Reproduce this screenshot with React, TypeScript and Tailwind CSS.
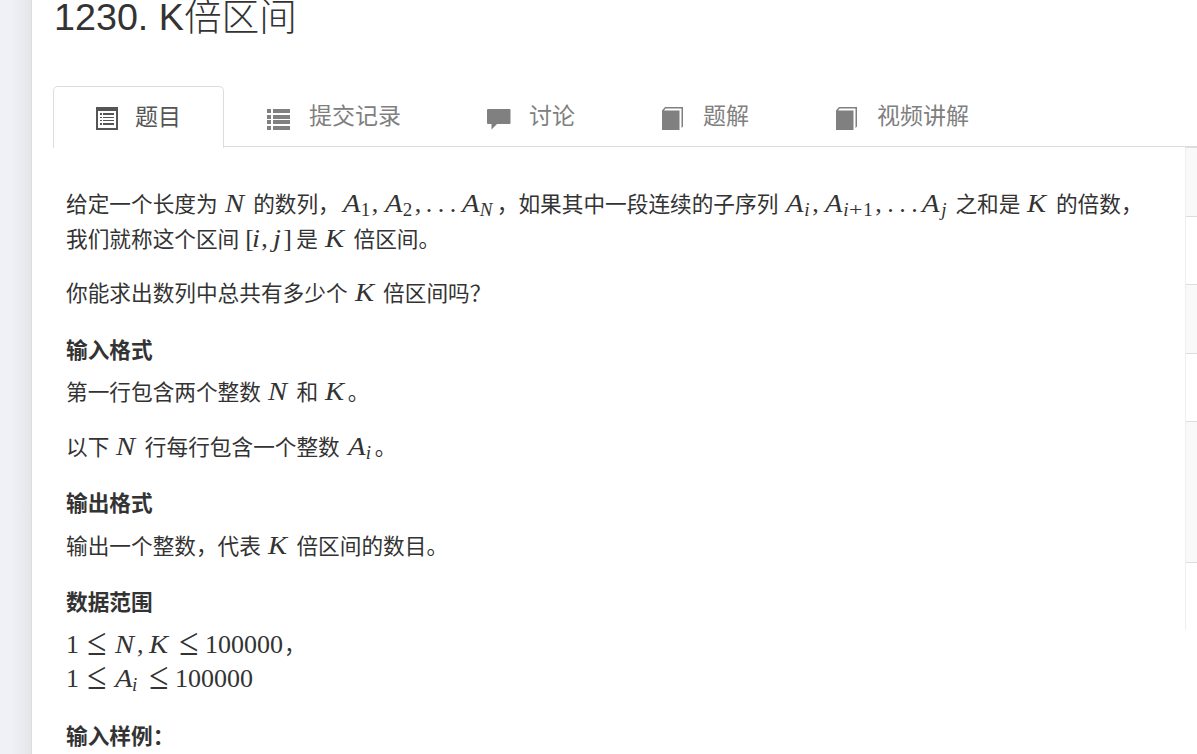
import type { ReactNode } from "react";

type IconName = "listAlt" | "list" | "comment" | "book";

const tabs: { label: string; icon: IconName; width: string; active?: boolean }[] = [
  { label: "题目", icon: "listAlt", width: "w-[171px]", active: true },
  { label: "提交记录", icon: "list", width: "w-[220px]" },
  { label: "讨论", icon: "comment", width: "w-[174px]" },
  { label: "题解", icon: "book", width: "w-[174px]" },
  { label: "视频讲解", icon: "book", width: "w-[220px]" },
];

function Icon({ name }: { name: IconName }) {
  return (
    <svg
      viewBox="0 0 24 24"
      className="mt-[3px] h-6 w-6 shrink-0 fill-current"
      shapeRendering="crispEdges"
    >
      {name === "listAlt" && (
        <>
          <path fillRule="evenodd" d="M0 0h22v23H0zM2 4v17h18V4z" />
          <path d="M4 6h2v2H4zM7 6h11v2H7zM4 10h2v1H4zM7 10h11v1H7zM4 13h2v1H4zM7 13h11v1H7zM4 16h2v2H4zM7 16h11v2H7z" />
        </>
      )}
      {name === "list" && (
        <path d="M0 3h4v4H0zM6 3h17v4H6zM0 9h4v4H0zM6 9h17v4H6zM0 14h4v4H0zM6 14h17v4H6zM0 20h4v4H0zM6 20h17v4H6z" />
      )}
      {name === "comment" && (
        <path
          shapeRendering="auto"
          d="M1 3h21.500a1 1 0 0 1 1 1v13a1 1 0 0 1-1 1H10l-5.500 5.500V18H1a1 1 0 0 1-1-1V4a1 1 0 0 1 1-1z"
        />
      )}
      {name === "book" && (
        <path
          shapeRendering="auto"
          d="M4 1H22v19.500l-1.500 1.500V2.500H4.500L3 4.500H18.500v19.500H1V4.500z"
        />
      )}
    </svg>
  );
}

function Sym({ w, children }: { w: string; children: ReactNode }) {
  return (
    <span className={`inline-block ${w}`}>
      <i className="inline-block origin-left scale-x-[1.1]">{children}</i>
    </span>
  );
}

function Sub({ w, italic, children }: { w: string; italic?: boolean; children: ReactNode }) {
  return (
    <span className={`relative top-[4px] inline-block text-[19px] ${italic ? "italic" : ""} ${w}`}>
      {children}
    </span>
  );
}

function Op({ w, children }: { w: string; children: ReactNode }) {
  return <span className={`inline-block ${w}`}>{children}</span>;
}

function Leq({ w }: { w: string }) {
  return (
    <span className={`inline-block ${w}`}>
      <span className="inline-block origin-[left_60%] scale-x-[1.35] scale-y-[1.5] font-['Liberation_Serif',serif] font-light">
        ≤
      </span>
    </span>
  );
}

function Formula({ children }: { children: ReactNode }) {
  return (
    <span className="inline-block h-[34px] align-baseline font-['Liberation_Serif','DejaVu_Serif',serif] text-[26px] leading-[34px]">
      {children}
    </span>
  );
}

function K() {
  return (
    <Formula>
      <Sym w="w-[23.5px] pl-px">K</Sym>
    </Formula>
  );
}

function N() {
  return (
    <Formula>
      <Sym w="w-[23.5px] pl-px">N</Sym>
    </Formula>
  );
}

function Line({ children }: { children: ReactNode }) {
  return <div className="h-[34.5px] leading-[34.5px] whitespace-nowrap">{children}</div>;
}

function Heading({ children }: { children: ReactNode }) {
  return <h4 className="mt-[28px] mb-[12.5px] h-6 leading-6 font-bold">{children}</h4>;
}

function Statement() {
  return (
    <article className="w-[1153px] shrink-0 pt-10 pl-[34px] text-[21.67px]">
      <Line>
        给定一个长度为 <N /> 的数列，
        <Formula>
          <Sym w="w-[21px] pl-[3px]">A</Sym>
          <Sub w="w-[11px]">1</Sub>
          <Op w="w-[13px]">,</Op>
          <Sym w="w-[18px]">A</Sym>
          <Sub w="w-[12px]">2</Sub>
          <Op w="w-[11px]">,</Op>
          <Op w="w-[12px]">.</Op>
          <Op w="w-[12px]">.</Op>
          <Op w="w-[12px]">.</Op>
          <Sym w="w-[18px]">A</Sym>
          <Sub w="w-[17px]" italic>
            N
          </Sub>
        </Formula>
        ，如果其中一段连续的子序列{" "}
        <Formula>
          <Sym w="w-[20px] pl-[2px]">A</Sym>
          <Sub w="w-[8px]" italic>
            i
          </Sub>
          <Op w="w-[13px]">,</Op>
          <Sym w="w-[18px]">A</Sym>
          <Sub w="w-[6px]" italic>
            i
          </Sub>
          <Sub w="w-[14px]">
            <span className="inline-block origin-left scale-x-[1.25]">+</span>
          </Sub>
          <Sub w="w-[12px]">1</Sub>
          <Op w="w-[12px]">,</Op>
          <Op w="w-[12px]">.</Op>
          <Op w="w-[12px]">.</Op>
          <Op w="w-[11px]">.</Op>
          <Sym w="w-[19px]">A</Sym>
          <Sub w="w-[8px]" italic>
            j
          </Sub>
        </Formula>{" "}
        之和是 <K /> 的倍数，
      </Line>
      <Line>
        我们就称这个区间{" "}
        <Formula>
          <Op w="w-[7px]">[</Op>
          <Sym w="w-[9px]">i</Sym>
          <Op w="w-[12px]">,</Op>
          <Sym w="w-[10px]">j</Sym>
          <Op w="w-[7px]">]</Op>
        </Formula>{" "}
        是 <K /> 倍区间。
      </Line>
      <div className="mt-5">
        <Line>
          你能求出数列中总共有多少个 <K /> 倍区间吗？
        </Line>
      </div>
      <Heading>输入格式</Heading>
      <Line>
        第一行包含两个整数 <N /> 和 <K />。
      </Line>
      <div className="mt-5">
        <Line>
          以下 <N /> 行每行包含一个整数{" "}
          <Formula>
            <Sym w="w-[20px] pl-[2px]">A</Sym>
            <Sub w="w-[9px]" italic>
              i
            </Sub>
          </Formula>
          。
        </Line>
      </div>
      <Heading>输出格式</Heading>
      <Line>
        输出一个整数，代表 <K /> 倍区间的数目。
      </Line>
      <Heading>数据范围</Heading>
      <Line>
        <Formula>
          <Op w="w-[21px]">1</Op>
          <Leq w="w-[28px]" />
          <Sym w="w-[22px]">N</Sym>
          <Op w="w-[12px]">,</Op>
          <Sym w="w-[30px]">K</Sym>
          <Leq w="w-[26px]" />
          <Op w="w-[79px]">100000</Op>
        </Formula>
        ，
      </Line>
      <Line>
        <Formula>
          <Op w="w-[21px]">1</Op>
          <Leq w="w-[28px]" />
          <Sym w="w-[17px]">A</Sym>
          <Sub w="w-[17px]" italic>
            i
          </Sub>
          <Leq w="w-[26px]" />
          <Op w="w-[79px]">100000</Op>
        </Formula>
      </Line>
      <Heading>输入样例：</Heading>
    </article>
  );
}

function SideTable() {
  return (
    <aside className="flex-1">
      <div className="h-[483px] border-t border-l border-t-[#ddd] border-l-[#eee]">
        <div className="h-[69px] border-b border-[#ddd] bg-[#f9f9f9]" />
        <div className="h-[68px] border-b border-[#ddd]" />
        <div className="h-[69px] border-b border-[#ddd] bg-[#f9f9f9]" />
        <div className="h-[68px] border-b border-[#ddd]" />
        <div className="h-[141px] border-b border-[#ddd] bg-[#f9f9f9]" />
      </div>
    </aside>
  );
}

export default function App() {
  return (
    <div className="flex h-[754px] w-[1197px] overflow-hidden bg-white font-['Liberation_Sans','Noto_Sans_CJK_SC',sans-serif] text-[#333]">
      <div className="w-[31px] shrink-0 bg-linear-to-r from-[#eff1f6] from-35% to-[#e5e6ea]" />
      <main className="w-[1166px] shrink-0 border-l border-[#ddd]">
        <h1 className="h-[86px] pl-[22px] text-[37.7px] leading-[34px] font-light whitespace-nowrap">
          1230. K倍区间
        </h1>
        <nav className="ml-[21px] flex h-[61px] border-b border-[#ddd]">
          {tabs.map((tab) => (
            <button
              key={tab.label}
              className={`flex shrink-0 items-center text-[23px] whitespace-nowrap ${tab.width} ${
                tab.active
                  ? "h-[62px] gap-[15px] rounded-t-[5px] border border-b-0 border-[#ddd] bg-white pl-[42px] text-[#555]"
                  : "h-[61px] gap-[18px] pl-[43px] text-[#808080]"
              }`}
            >
              <Icon name={tab.icon} />
              <span>{tab.label}</span>
            </button>
          ))}
        </nav>
        <div className="flex">
          <Statement />
          <SideTable />
        </div>
      </main>
    </div>
  );
}
